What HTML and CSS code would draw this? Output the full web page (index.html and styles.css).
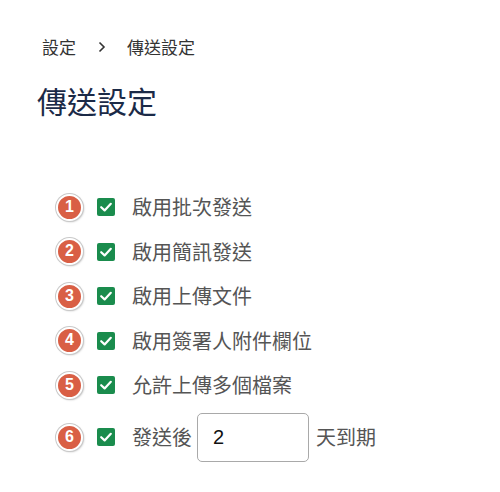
FILE: index.html
```html
<!DOCTYPE html>
<html lang="zh-Hant">
<head>
<meta charset="utf-8">
<title>傳送設定</title>
<link rel="stylesheet" href="styles.css">
</head>
<body>
<div class="page">
  <nav class="crumbs">
    <span class="crumb">設定</span>
    <svg class="chev" viewBox="0 0 8 12" width="8" height="12"><path d="M1.5 1.5 L6 6 L1.5 10.5" fill="none" stroke="#333" stroke-width="1.6"/></svg>
    <span class="crumb">傳送設定</span>
  </nav>
  <h1 class="title">傳送設定</h1>
  <div class="list">
    <div class="row">
      <span class="badge">1</span>
      <span class="check"><svg viewBox="0 0 18 18" width="18" height="18"><path d="M4.2 9.2 L7.6 12.4 L13.8 5.8" fill="none" stroke="#fff" stroke-width="2.2" stroke-linecap="round" stroke-linejoin="round"/></svg></span>
      <span class="label">啟用批次發送</span>
    </div>
    <div class="row">
      <span class="badge">2</span>
      <span class="check"><svg viewBox="0 0 18 18" width="18" height="18"><path d="M4.2 9.2 L7.6 12.4 L13.8 5.8" fill="none" stroke="#fff" stroke-width="2.2" stroke-linecap="round" stroke-linejoin="round"/></svg></span>
      <span class="label">啟用簡訊發送</span>
    </div>
    <div class="row">
      <span class="badge">3</span>
      <span class="check"><svg viewBox="0 0 18 18" width="18" height="18"><path d="M4.2 9.2 L7.6 12.4 L13.8 5.8" fill="none" stroke="#fff" stroke-width="2.2" stroke-linecap="round" stroke-linejoin="round"/></svg></span>
      <span class="label">啟用上傳文件</span>
    </div>
    <div class="row">
      <span class="badge">4</span>
      <span class="check"><svg viewBox="0 0 18 18" width="18" height="18"><path d="M4.2 9.2 L7.6 12.4 L13.8 5.8" fill="none" stroke="#fff" stroke-width="2.2" stroke-linecap="round" stroke-linejoin="round"/></svg></span>
      <span class="label">啟用簽署人附件欄位</span>
    </div>
    <div class="row">
      <span class="badge">5</span>
      <span class="check"><svg viewBox="0 0 18 18" width="18" height="18"><path d="M4.2 9.2 L7.6 12.4 L13.8 5.8" fill="none" stroke="#fff" stroke-width="2.2" stroke-linecap="round" stroke-linejoin="round"/></svg></span>
      <span class="label">允許上傳多個檔案</span>
    </div>
    <div class="row">
      <span class="badge">6</span>
      <span class="check"><svg viewBox="0 0 18 18" width="18" height="18"><path d="M4.2 9.2 L7.6 12.4 L13.8 5.8" fill="none" stroke="#fff" stroke-width="2.2" stroke-linecap="round" stroke-linejoin="round"/></svg></span>
      <span class="label">發送後</span>
      <input class="days" type="text" value="2">
      <span class="label">天到期</span>
    </div>
  </div>
</div>
</body>
</html>
```
FILE: styles.css
```css
html, body {
  margin: 0;
  padding: 0;
  background: #fff;
}
body {
  font-family: "Noto Sans CJK TC", "Noto Sans", "Liberation Sans", sans-serif;
}
.page {
  padding: 35px 0 0 0;
}
.crumbs {
  display: flex;
  align-items: center;
  margin-left: 42px;
  height: 24px;
  font-size: 17px;
  line-height: 24px;
  color: #333;
}
.chev {
  margin: 0 21px 0 22px;
}
.title {
  margin: 23px 0 0 37px;
  font-size: 30px;
  line-height: 36px;
  font-weight: 400;
  color: #1b2a47;
}
.list {
  display: flex;
  flex-direction: column;
  gap: 10.5px;
  margin: 72px 0 0 56px;
}
.row {
  display: flex;
  align-items: center;
  min-height: 34px;
}
.badge {
  box-sizing: border-box;
  width: 27px;
  height: 27px;
  border-radius: 50%;
  background: #d95f45;
  border: 2.5px solid #fff;
  box-shadow: 0 0 0 1px #c9c9c9, 1px 1px 2px rgba(0,0,0,0.25);
  color: #fff;
  font-family: "Liberation Sans", Arial, sans-serif;
  font-weight: 700;
  font-size: 16px;
  line-height: 22px;
  text-align: center;
}
.check {
  width: 18px;
  height: 18px;
  border-radius: 2px;
  background: #1a8c4d;
  margin-left: 14px;
  display: flex;
}
.label {
  font-size: 20px;
  line-height: 34px;
  color: #555;
  margin-left: 17px;
}
.days {
  box-sizing: border-box;
  width: 112px;
  height: 49px;
  margin-left: 5px;
  border: 1px solid #a9a9a9;
  border-radius: 5px;
  padding: 0 0 0 15px;
  font-family: "Liberation Sans", Arial, sans-serif;
  font-size: 20px;
  color: #111;
  outline: none;
}
.days + .label {
  margin-left: 7px;
}
```
